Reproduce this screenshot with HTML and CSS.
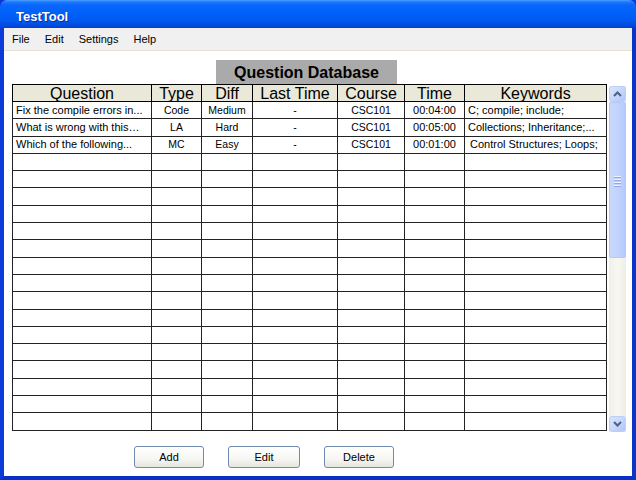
FILE: index.html
```html
<!DOCTYPE html>
<html>
<head>
<meta charset="utf-8">
<link rel="stylesheet" href="styles.css">
</head>
<body>
<div class="window">
  <div class="titlebar"><span class="title">TestTool</span></div>
  <div class="frame">
    <div class="menubar">
      <span class="menu">File</span>
      <span class="menu">Edit</span>
      <span class="menu">Settings</span>
      <span class="menu">Help</span>
    </div>
    <div class="content">
      <div class="caption">Question Database</div>
      <div class="grid-area">
        <table class="grid">
          <colgroup>
            <col class="c-q"><col class="c-type"><col class="c-diff"><col class="c-last"><col class="c-course"><col class="c-time"><col class="c-kw">
          </colgroup>
          <thead>
            <tr><th>Question</th><th>Type</th><th>Diff</th><th>Last Time</th><th>Course</th><th>Time</th><th>Keywords</th></tr>
          </thead>
          <tbody>
            <tr><td class="l">Fix the compile errors in...</td><td class="t">Code</td><td class="t">Medium</td><td class="t">-</td><td class="t">CSC101</td><td class="m">00:04:00</td><td class="l">C; compile; include;</td></tr>
            <tr><td class="l">What is wrong with this…</td><td class="t">LA</td><td class="t">Hard</td><td class="t">-</td><td class="t">CSC101</td><td class="m">00:05:00</td><td class="l">Collections; Inheritance;...</td></tr>
            <tr><td class="l">Which of the following...</td><td class="t">MC</td><td class="t">Easy</td><td class="t">-</td><td class="t">CSC101</td><td class="m">00:01:00</td><td class="l indent">Control Structures; Loops;</td></tr>
            <tr><td></td><td></td><td></td><td></td><td></td><td></td><td></td></tr>
            <tr><td></td><td></td><td></td><td></td><td></td><td></td><td></td></tr>
            <tr><td></td><td></td><td></td><td></td><td></td><td></td><td></td></tr>
            <tr><td></td><td></td><td></td><td></td><td></td><td></td><td></td></tr>
            <tr><td></td><td></td><td></td><td></td><td></td><td></td><td></td></tr>
            <tr><td></td><td></td><td></td><td></td><td></td><td></td><td></td></tr>
            <tr><td></td><td></td><td></td><td></td><td></td><td></td><td></td></tr>
            <tr><td></td><td></td><td></td><td></td><td></td><td></td><td></td></tr>
            <tr><td></td><td></td><td></td><td></td><td></td><td></td><td></td></tr>
            <tr><td></td><td></td><td></td><td></td><td></td><td></td><td></td></tr>
            <tr><td></td><td></td><td></td><td></td><td></td><td></td><td></td></tr>
            <tr><td></td><td></td><td></td><td></td><td></td><td></td><td></td></tr>
            <tr><td></td><td></td><td></td><td></td><td></td><td></td><td></td></tr>
            <tr><td></td><td></td><td></td><td></td><td></td><td></td><td></td></tr>
            <tr><td></td><td></td><td></td><td></td><td></td><td></td><td></td></tr>
            <tr><td></td><td></td><td></td><td></td><td></td><td></td><td></td></tr>
          </tbody>
        </table>
        <div class="scrollbar">
          <div class="sb-btn">
            <svg width="9" height="6" viewBox="0 0 9 6"><polyline points="1,5 4.5,1.5 8,5" fill="none" stroke="#4d6185" stroke-width="2"/></svg>
          </div>
          <div class="sb-thumb">
            <span class="grip"></span><span class="grip"></span><span class="grip"></span><span class="grip"></span>
          </div>
          <div class="sb-track"></div>
          <div class="sb-btn">
            <svg width="9" height="6" viewBox="0 0 9 6"><polyline points="1,1 4.5,4.5 8,1" fill="none" stroke="#4d6185" stroke-width="2"/></svg>
          </div>
        </div>
      </div>
      <div class="buttons">
        <button class="btn">Add</button>
        <button class="btn">Edit</button>
        <button class="btn">Delete</button>
      </div>
    </div>
  </div>
</div>
</body>
</html>
```
FILE: styles.css
```css
html, body {
  margin: 0;
  padding: 0;
  background: #ffffff;
}
.window {
  width: 636px;
  height: 480px;
  display: flex;
  flex-direction: column;
  font-family: "Liberation Sans", Arial, sans-serif;
  background: #0a38d8;
}
.titlebar {
  height: 28px;
  box-sizing: border-box;
  padding: 5px 0 0 16px;
  display: flex;
  align-items: center;
  border-radius: 7px 7px 0 0;
  background: linear-gradient(#4fa0ff 0px, #1c78ff 2px, #0a66fb 5px, #0062fa 12px, #005af2 20px, #0049dc 26px, #0040d2 28px);
}
.title {
  color: #ffffff;
  font-weight: bold;
  font-size: 13px;
  text-shadow: 1px 1px 0 #0a2d9a;
}
.frame {
  flex: 1;
  display: flex;
  flex-direction: column;
  border-left: 4px solid #0b3bd9;
  border-right: 4px solid #0a35c8;
  border-bottom: 4px solid #0a30c8;
  background: #ffffff;
  min-height: 0;
}
.menubar {
  height: 22px;
  background: #f0f0f0;
  border-bottom: 1px solid #e7e2d0;
  display: flex;
  align-items: center;
  padding-left: 8px;
  gap: 15px;
  font-size: 11px;
  color: #000;
}
.content {
  flex: 1;
  padding: 9px 0 0 8px;
  display: flex;
  flex-direction: column;
}
.caption {
  margin-left: 204px;
  width: 181px;
  height: 24px;
  background: #aaaaaa;
  font-weight: bold;
  font-size: 16px;
  line-height: 25px;
  text-align: center;
  color: #000;
}
.grid-area {
  display: flex;
  align-items: flex-start;
  gap: 2px;
}
.grid {
  border-collapse: collapse;
  table-layout: fixed;
  width: 595px;
  border: 1px solid #000;
}
.c-q { width: 139px; }
.c-type { width: 50px; }
.c-diff { width: 51px; }
.c-last { width: 85px; }
.c-course { width: 67px; }
.c-time { width: 60px; }
.c-kw { width: 142px; }
.grid thead tr { height: 17px; }
.grid tbody tr { height: 17.3px; }
.grid th {
  background: #e9e8d9;
  font-weight: normal;
  font-size: 16px;
  line-height: 15px;
  padding: 0;
  border: 1px solid #000;
  vertical-align: bottom;
  color: #000;
}
.grid td {
  border: 1px solid #222;
  padding: 0 3px;
  font-size: 11px;
  line-height: 13px;
  color: #000;
  white-space: nowrap;
  overflow: hidden;
}
.grid td.l { text-align: left; }
.grid td.indent { padding-left: 5px; }
.grid td.t { text-align: center; font-size: 10.5px; }
.grid td.m { text-align: center; }
.scrollbar {
  margin-top: 2px;
  width: 17px;
  height: 346px;
  display: flex;
  flex-direction: column;
  background: linear-gradient(90deg, #f0efe9, #f8f7f3 50%, #eeede6);
}
.sb-btn {
  height: 16px;
  flex: none;
  box-sizing: border-box;
  border: 1px solid #bacff7;
  border-radius: 3px;
  background: linear-gradient(135deg, #dce6fd, #c2d3fc 60%, #b1c6f7);
  display: flex;
  align-items: center;
  justify-content: center;
}
.sb-thumb {
  height: 156px;
  flex: none;
  box-sizing: border-box;
  border: 1px solid #b5c9f5;
  border-radius: 2px;
  background: linear-gradient(90deg, #c8d7fd, #c2d3fc 50%, #b6cbfa);
  display: flex;
  flex-direction: column;
  align-items: center;
  justify-content: flex-start;
  padding-top: 73px;
  gap: 1px;
}
.grip {
  display: block;
  width: 7px;
  height: 1px;
  background: #eef3fe;
  border-bottom: 1px solid #8ea8e6;
}
.sb-track {
  flex: 1;
}
.buttons {
  margin-top: 14px;
  padding-left: 122px;
  display: flex;
  gap: 24px;
}
.btn {
  width: 70px;
  height: 22px;
  margin: 0;
  padding: 0;
  box-sizing: border-box;
  border: 1px solid #6f8bb0;
  border-radius: 3px;
  background: linear-gradient(#ffffff, #f6f6f3 60%, #e6e5de);
  font-family: "Liberation Sans", Arial, sans-serif;
  font-size: 11px;
  color: #000;
}
.btn:nth-child(2) { width: 72px; }
```
